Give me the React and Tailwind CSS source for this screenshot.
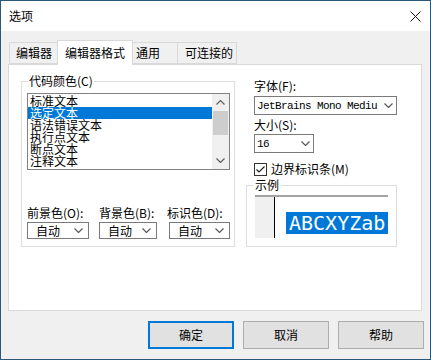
import React from "react";

const Chevron = ({ up = false, color = "#5a5a5a" }) => (
  <svg width="9" height="5" viewBox="0 0 9 5" className="shrink-0">
    <path
      d={up ? "M0.5 4.5 L4.5 0.5 L8.5 4.5" : "M0.5 0.5 L4.5 4.5 L8.5 0.5"}
      fill="none"
      stroke={color}
      strokeWidth="1.2"
    />
  </svg>
);

const Combo = ({ value, className, mono }) => (
  <div
    className={`flex items-center justify-between border border-[#7a7a7a] bg-white ${className}`}
  >
    <span
      className={
        mono
          ? "font-['Liberation_Mono',monospace] text-[11px] tracking-[-0.6px] leading-[12px] whitespace-nowrap"
          : "leading-[14px]"
      }
    >
      {value}
    </span>
    <Chevron />
  </div>
);

const codeItems = ["标准文本", "选定文本", "语法错误文本", "执行点文本", "断点文本", "注释文本"];

const tabs = [
  { label: "编辑器", className: "w-[48px] h-[22px] pl-[6px] border border-r-0 border-[#d9d9d9]" },
  { label: "编辑器格式", className: "w-[76px] h-[25px] -mb-px pl-[7px] border border-b-0 border-[#d9d9d9] bg-white relative z-10" },
  { label: "通用", className: "w-[45px] h-[22px] pl-[3px] border border-l-0 border-[#d9d9d9]" },
  { label: "可连接的", className: "w-[59px] h-[22px] pl-[7px] border border-l-0 border-[#d9d9d9]" },
];

const ColorField = ({ label, className, comboClass }) => (
  <div className={`flex flex-col ${className}`}>
    <span className="leading-[14px] whitespace-nowrap">{label}</span>
    <Combo value="自动" className={`mt-[2px] h-[17px] pl-[8px] pr-[5px] ${comboClass}`} />
  </div>
);

export default function App() {
  return (
    <div className="w-[431px] h-[360px] border border-[#2b5778] bg-[#f0f0f0] flex flex-col text-[12px] text-black font-['Noto_Sans_CJK_SC',sans-serif]">
      {/* title bar */}
      <div className="h-[30px] bg-white flex items-center justify-between pl-[8px] pr-[9px]">
        <span className="leading-[14px]">选项</span>
        <svg width="11" height="11" viewBox="0 0 11 11">
          <path d="M0.5 0.5 L10.5 10.5 M10.5 0.5 L0.5 10.5" stroke="#111" strokeWidth="1" />
        </svg>
      </div>

      {/* tabs */}
      <div className="mt-[9px] ml-[8px] h-[24px] flex items-end">
        {tabs.map((t) => (
          <div key={t.label} className={`flex items-center leading-[14px] ${t.className}`}>
            {t.label}
          </div>
        ))}
      </div>

      {/* panel */}
      <div className="ml-[7px] w-[414px] h-[247px] border border-[#d9d9d9] bg-white flex items-start pl-[12px]">
        <fieldset className="mt-[9px] w-[214px] border border-[#dcdcdc] pb-[7px]">
          <legend className="ml-[6px] px-[1px] leading-[14px]">代码颜色(C)</legend>
          <div className="mt-[5px] ml-[5px] w-[203px] h-[77px] border border-[#828282] flex">
            <div className="flex-1 pt-[1px]">
              {codeItems.map((item, i) => (
                <div
                  key={item}
                  className={`h-[12px] leading-[12px] pl-[2px] whitespace-nowrap ${
                    i === 1 ? "bg-[#0078d7] text-white" : ""
                  }`}
                >
                  {item}
                </div>
              ))}
            </div>
            <div className="w-[17px] bg-[#f0f0f0] flex flex-col">
              <div className="h-[17px] flex items-center justify-center">
                <Chevron up color="#606060" />
              </div>
              <div className="mx-[1px] h-[24px] bg-[#cdcdcd]" />
              <div className="flex-1" />
              <div className="h-[17px] flex items-center justify-center">
                <Chevron color="#606060" />
              </div>
            </div>
          </div>
          <div className="mt-[36px] flex">
            <ColorField label="前景色(O):" className="ml-[5px] w-[62px]" comboClass="w-[62px]" />
            <ColorField label="背景色(B):" className="ml-[10px] w-[58px]" comboClass="w-[58px]" />
            <ColorField label="标识色(D):" className="ml-[10px] w-[63px]" comboClass="ml-[2px] w-[61px]" />
          </div>
        </fieldset>

        <div className="ml-[11px] w-[151px] flex flex-col">
          <span className="mt-[14px] ml-[8px] leading-[14px]">字体(F):</span>
          <Combo
            value="JetBrains Mono Mediu"
            mono
            className="mt-[3px] ml-[8px] w-[143px] h-[19px] pl-[2px] pr-[3px]"
          />
          <span className="mt-[3px] ml-[8px] leading-[14px]">大小(S):</span>
          <Combo
            value="16"
            mono
            className="mt-[2px] ml-[8px] w-[60px] h-[19px] pl-[2px] pr-[3px]"
          />
          <div className="mt-[9px] ml-[8px] h-[14px] flex items-center gap-[4px]">
            <div className="w-[13px] h-[13px] border border-[#333] bg-white flex items-center justify-center">
              <svg width="11" height="11" viewBox="0 0 11 11">
                <path d="M1.5 5.5 L4 8 L9.5 2.5" fill="none" stroke="#222" strokeWidth="1.2" />
              </svg>
            </div>
            <span className="leading-[14px]">边界标识条(M)</span>
          </div>
          <fieldset className="mt-[2px] w-[151px] border border-[#dcdcdc] pb-[8px]">
            <legend className="ml-[6px] px-[2px] leading-[14px]">示例</legend>
            <div className="mt-[3px] ml-[8px] w-[133px] h-[43px] border-t-2 border-[#a3a3a3] flex overflow-hidden">
              <div className="w-[19px] bg-[#f0f0f0]" />
              <div className="w-[1px] bg-black" />
              <div className="flex-1 pl-[11px] pt-[15px]">
                <div className="h-[22px] bg-[#0078d7] text-white pl-[3px] font-['DejaVu_Sans_Mono',monospace] text-[20px] leading-[22px] whitespace-nowrap">
                  ABCXYZab
                </div>
              </div>
            </div>
          </fieldset>
        </div>
      </div>

      {/* buttons */}
      <div className="mt-[10px] flex justify-end pr-[6px] gap-[9px]">
        <button className="w-[86px] h-[28px] bg-[#e1e1e1] border-2 border-[#0078d7] leading-[14px]">
          确定
        </button>
        <button className="w-[86px] h-[28px] bg-[#e1e1e1] border border-[#adadad] leading-[14px]">
          取消
        </button>
        <button className="w-[86px] h-[28px] bg-[#e1e1e1] border border-[#adadad] leading-[14px]">
          帮助
        </button>
      </div>
    </div>
  );
}
